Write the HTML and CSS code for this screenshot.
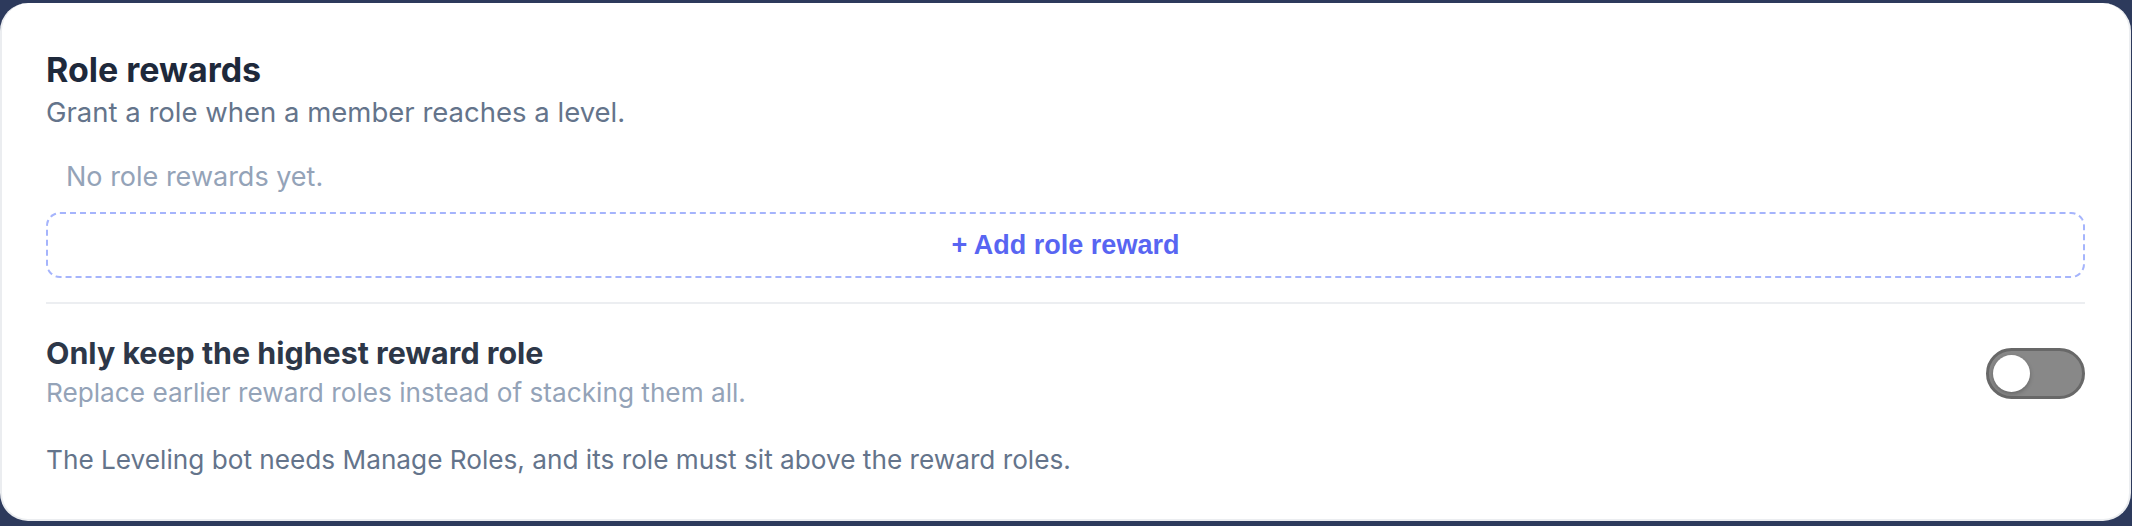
FILE: index.html
```html
<!DOCTYPE html>
<html lang="en">
<head>
    <meta charset="UTF-8">
    <meta name="viewport" content="width=device-width, initial-scale=1.0">
    <title>Role rewards</title>
    <link rel="stylesheet" href="styles.css">
</head>
<body>
    <div class="card">
        <h2 class="card-title">Role rewards</h2>
        <p class="card-sub">Grant a role when a member reaches a level.</p>

        <!-- Reward list -->
        <p class="empty-note">No role rewards yet.</p>
        <button class="add-btn">+ Add role reward</button>

        <hr class="divider">

        <!-- Option -->
        <div class="option-row">
            <div class="option-text">
                <div class="option-title">Only keep the highest reward role</div>
                <div class="option-desc">Replace earlier reward roles instead of stacking them all.</div>
            </div>
            <div class="toggle"><span class="knob"></span></div>
        </div>

        <p class="hint">The Leveling bot needs Manage Roles, and its role must sit above the reward roles.</p>
    </div>
</body>
</html>
```

FILE: styles.css
```css
body {
    margin: 0;
    padding: 3px 1px 4px 0;
    background-color: #2d3a5c;
    font-family: Inter, "Noto Sans", sans-serif;
}

.card {
    background: #ffffff;
    border: 2px solid #ebedf0;
    border-top-width: 0;
    border-radius: 28px;
    padding: 47px 44px 41px 44px;
}

.card-title {
    margin: 0;
    font-size: 34px;
    line-height: 40px;
    font-weight: 700;
    color: #1e293b;
}

.card-sub {
    margin: 4px 0 0 0;
    font-size: 27.5px;
    line-height: 36px;
    color: #64748b;
}

.empty-note {
    margin: 29px 0 0 0;
    padding-left: 20px;
    font-size: 27px;
    line-height: 36px;
    color: #94a3b8;
}

.add-btn {
    display: block;
    width: 100%;
    height: 66px;
    margin-top: 17px;
    padding-top: 2px;
    background: transparent;
    border: 2px dashed #a5b4fc;
    border-radius: 14px;
    font-family: "Liberation Sans", Arial, sans-serif;
    font-size: 27px;
    font-weight: bold;
    color: #5865f2;
    cursor: pointer;
}

.divider {
    margin: 24px 0 0 0;
    border: none;
    border-top: 2px solid #eceef1;
}

.option-row {
    display: flex;
    align-items: center;
    justify-content: space-between;
    margin-top: 31px;
}

.option-title {
    font-size: 30.4px;
    line-height: 36px;
    font-weight: 700;
    color: #2d3748;
}

.option-desc {
    margin-top: 4px;
    font-size: 26.2px;
    line-height: 36px;
    color: #94a3b8;
}

.toggle {
    display: flex;
    align-items: center;
    box-sizing: border-box;
    width: 99px;
    height: 51px;
    padding: 0 4px;
    background: #888888;
    border: 3px solid #686868;
    border-radius: 26px;
    cursor: pointer;
}

.knob {
    width: 37px;
    height: 37px;
    border-radius: 50%;
    background: #ffffff;
    box-shadow: 0 2px 4px rgba(0, 0, 0, 0.25);
}

.hint {
    margin: 31px 0 0 0;
    font-size: 26.2px;
    line-height: 36px;
    color: #64748b;
}
```
